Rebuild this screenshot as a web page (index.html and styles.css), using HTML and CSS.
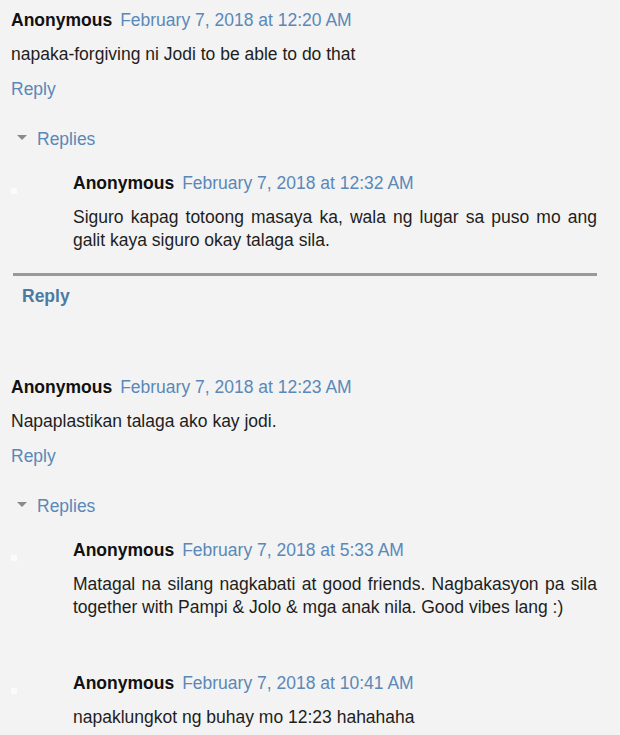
FILE: index.html
```html
<!DOCTYPE html>
<html lang="tl">
<head>
    <meta charset="UTF-8">
    <meta name="viewport" content="width=device-width, initial-scale=1.0">
    <title>Comments</title>
    <link rel="stylesheet" href="styles.css">
</head>
<body>
    <div class="comments">

        <div class="comment">
            <div class="comment-header">
                <span class="user">Anonymous</span>
                <a class="timestamp" href="#">February 7, 2018 at 12:20 AM</a>
            </div>
            <p class="comment-body">napaka-forgiving ni Jodi to be able to do that</p>
            <a class="reply-link" href="#">Reply</a>

            <div class="thread">
                <div class="thread-toggle">
                    <span class="toggle-arrow"></span>
                    <a href="#">Replies</a>
                </div>
                <div class="reply-item">
                    <span class="avatar"></span>
                    <div class="reply-content">
                        <div class="comment-header">
                            <span class="user">Anonymous</span>
                            <a class="timestamp" href="#">February 7, 2018 at 12:32 AM</a>
                        </div>
                        <p class="comment-body">Siguro kapag totoong masaya ka, wala ng lugar sa puso mo ang galit kaya siguro okay talaga sila.</p>
                    </div>
                </div>
                <div class="thread-end">
                    <a href="#">Reply</a>
                </div>
            </div>
        </div>

        <div class="comment">
            <div class="comment-header">
                <span class="user">Anonymous</span>
                <a class="timestamp" href="#">February 7, 2018 at 12:23 AM</a>
            </div>
            <p class="comment-body">Napaplastikan talaga ako kay jodi.</p>
            <a class="reply-link" href="#">Reply</a>

            <div class="thread">
                <div class="thread-toggle">
                    <span class="toggle-arrow"></span>
                    <a href="#">Replies</a>
                </div>
                <div class="reply-item">
                    <span class="avatar"></span>
                    <div class="reply-content">
                        <div class="comment-header">
                            <span class="user">Anonymous</span>
                            <a class="timestamp" href="#">February 7, 2018 at 5:33 AM</a>
                        </div>
                        <p class="comment-body">Matagal na silang nagkabati at good friends. Nagbakasyon pa sila together with Pampi &amp; Jolo &amp; mga anak nila. Good vibes lang :)</p>
                    </div>
                </div>
                <div class="reply-item">
                    <span class="avatar"></span>
                    <div class="reply-content">
                        <div class="comment-header">
                            <span class="user">Anonymous</span>
                            <a class="timestamp" href="#">February 7, 2018 at 10:41 AM</a>
                        </div>
                        <p class="comment-body">napaklungkot ng buhay mo 12:23 hahahaha</p>
                    </div>
                </div>
            </div>
        </div>

    </div>
</body>
</html>
```

FILE: styles.css
```css
:root {
    --bg: #f3f3f3;
    --text: #1e1e1e;
    --link: #5a88b8;
    --link-strong: #4b7aa3;
    --rule: #999999;
}

* {
    margin: 0;
    padding: 0;
    box-sizing: border-box;
}

body {
    background: var(--bg);
    font-family: "Liberation Sans", Arial, sans-serif;
    font-size: 17.5px;
    line-height: 23px;
    color: var(--text);
    overflow: hidden;
}

a {
    color: var(--link);
    text-decoration: none;
}

.comments {
    padding: 9px 23px 0 11px;
}

.comment + .comment {
    margin-top: 68px;
}

.comment-header {
    display: flex;
    gap: 8px;
    white-space: nowrap;
}

.user {
    font-weight: bold;
    color: #111;
}

.comment-body {
    margin-top: 11px;
    text-align: justify;
}

.reply-link {
    display: block;
    margin-top: 12px;
}

.thread {
    margin-top: 27px;
    margin-left: 2px;
}

.thread-toggle {
    display: flex;
    align-items: center;
    padding-left: 4px;
}

.toggle-arrow {
    width: 0;
    height: 0;
    border-left: 5px solid transparent;
    border-right: 5px solid transparent;
    border-top: 5px solid #8a8a8a;
    margin-right: 10px;
    margin-top: -5px;
}

.reply-item {
    display: flex;
    margin-top: 21px;
}

.reply-item + .reply-item {
    margin-top: 53px;
}

.avatar {
    flex: none;
    width: 6px;
    height: 6px;
    margin: 16px 0 0 -2px;
    background: #fbfbfb;
}

.reply-content {
    flex: 1;
    margin-left: 56px;
}

.thread-end {
    margin-top: 21px;
    border-top: 3px solid var(--rule);
    padding: 9px 0 0 9px;
}

.thread-end a {
    font-weight: bold;
    color: var(--link-strong);
}
```
